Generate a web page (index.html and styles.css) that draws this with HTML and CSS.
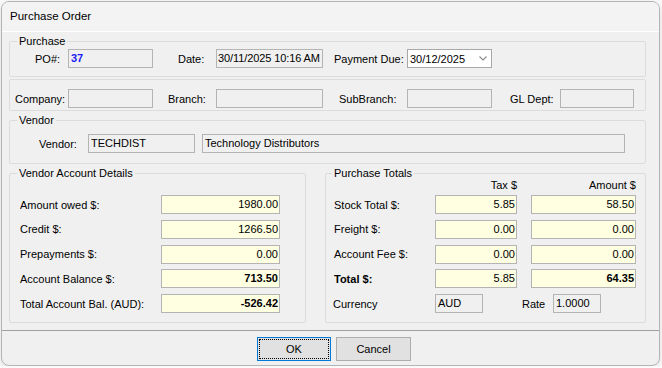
FILE: index.html
```html
<!DOCTYPE html>
<html>
  <head>
    <meta charset="utf-8">
    <title>Purchase Order</title>
    <link rel="stylesheet" href="styles.css">
  </head>
  <body>
    <div class="window">
      <div class="titlebar">Purchase Order</div>

      <div class="content">
        <!-- header -->
        <fieldset class="group g-purchase">
          <legend>Purchase</legend>
          <div class="top-row">
            <span class="lbl lbl-po">PO#:</span>
            <div class="field po-no">37</div>
            <span class="lbl lbl-date">Date:</span>
            <div class="field date">30/11/2025 10:16 AM</div>
            <span class="lbl lbl-due">Payment Due:</span>
            <div class="combo">
              <span>30/12/2025</span>
              <svg class="chevron" width="8" height="5" viewBox="0 0 8 5"><polyline points="0.5,0.5 4,4 7.5,0.5" fill="none" stroke="#8a8a8a" stroke-width="1.1"/></svg>
            </div>
          </div>
        </fieldset>

        <fieldset class="group g-org">
          <div class="top-row">
            <span class="lbl lbl-company">Company:</span>
            <div class="field"></div>
            <span class="lbl lbl-branch">Branch:</span>
            <div class="field"></div>
            <span class="lbl lbl-sub">SubBranch:</span>
            <div class="field"></div>
            <span class="lbl lbl-gl">GL Dept:</span>
            <div class="field"></div>
          </div>
        </fieldset>

        <fieldset class="group g-vendor">
          <legend>Vendor</legend>
          <div class="vendor-row">
            <span class="lbl lbl-vendor">Vendor:</span>
            <div class="field">TECHDIST</div>
            <div class="field vendor-name">Technology Distributors</div>
          </div>
        </fieldset>

        <div class="lower">
          <!-- account -->
          <fieldset class="group g-account">
            <legend>Vendor Account Details</legend>
            <div class="rows">
              <div class="acc-row">
                <span class="lbl">Amount owed $:</span>
                <div class="field num">1980.00</div>
              </div>
              <div class="acc-row">
                <span class="lbl">Credit $:</span>
                <div class="field num">1266.50</div>
              </div>
              <div class="acc-row">
                <span class="lbl">Prepayments $:</span>
                <div class="field num">0.00</div>
              </div>
              <div class="acc-row">
                <span class="lbl">Account Balance $:</span>
                <div class="field num bold">713.50</div>
              </div>
              <div class="acc-row">
                <span class="lbl">Total Account Bal. (AUD):</span>
                <div class="field num bold">-526.42</div>
              </div>
            </div>
          </fieldset>

          <!-- totals -->
          <fieldset class="group g-totals">
            <legend>Purchase Totals</legend>
            <div class="tot-head">
              <span></span>
              <span class="tax">Tax $</span>
              <span class="amount">Amount $</span>
            </div>
            <div class="rows">
              <div class="tot-row">
                <span class="lbl">Stock Total $:</span>
                <div class="field num tax">5.85</div>
                <div class="field num amount">58.50</div>
              </div>
              <div class="tot-row">
                <span class="lbl">Freight $:</span>
                <div class="field num tax">0.00</div>
                <div class="field num amount">0.00</div>
              </div>
              <div class="tot-row">
                <span class="lbl">Account Fee $:</span>
                <div class="field num tax">0.00</div>
                <div class="field num amount">0.00</div>
              </div>
              <div class="tot-row">
                <span class="lbl bold">Total $:</span>
                <div class="field num tax">5.85</div>
                <div class="field num amount bold">64.35</div>
              </div>
              <div class="cur-row">
                <span class="lbl lbl-cur">Currency</span>
                <div class="field small">AUD</div>
                <span class="lbl lbl-rate">Rate</span>
                <div class="field small">1.0000</div>
              </div>
            </div>
          </fieldset>
        </div>
      </div>

      <div class="buttons">
        <button class="btn btn-ok">OK</button>
        <button class="btn">Cancel</button>
      </div>
    </div>
  </body>
</html>
```

FILE: styles.css
```css
* {
  box-sizing: border-box;
}
body {
  margin: 0;
  background-color: #fbfbfb;
  font-family: "Liberation Sans", Arial, sans-serif;
  font-size: 11px;
  color: #000;
}
.window {
  display: flex;
  flex-direction: column;
  width: 659px;
  height: 365px;
  margin: 1px 0 0 1px;
  border: 1px solid #b4b4b4;
  border-radius: 8px;
  background-color: #f0f0f0;
  overflow: hidden;
  box-shadow: 0 2px 8px rgba(0, 0, 0, .12);
}
.titlebar {
  height: 30px;
  padding-left: 8px;
  line-height: 29px;
  font-size: 11.5px;
  background-color: #f3f3f3;
  border-bottom: 1px solid #fff;
}
.content {
  padding: 0 13px 0 7px;
}

/* group boxes */
.group {
  min-width: 0;
  margin: 2px 0 0;
  padding: 0;
  border: 1px solid #dcdcdc;
  border-radius: 2px;
}
.group legend {
  margin-left: 7px;
  padding: 0 2px;
  line-height: 15px;
}
.g-purchase {
  padding-bottom: 8px;
}
.g-org {
  padding: 9px 0 2px;
}
.g-vendor {
  padding: 6px 0 10px;
}
.lower {
  display: flex;
  gap: 19px;
  margin-top: 2px;
}
.g-account {
  width: 297px;
  margin: 0;
  padding: 14px 0 9px 10px;
}
.g-account legend {
  margin-left: -3px;
}
.g-totals {
  width: 321px;
  margin: 0;
  padding: 0 0 9px 8px;
}
.g-totals legend {
  margin-left: -2px;
}

/* rows */
.top-row {
  display: grid;
  grid-template-columns: 58px 85px 63px 107px 84px 85px 68px 74px;
  align-items: center;
  height: 19px;
}
.vendor-row {
  display: grid;
  grid-template-columns: 78px 107px 430px;
  align-items: center;
  height: 19px;
}
.vendor-name {
  margin-left: 7px;
  background-color: #f6f6f6;
}
.lbl {
  white-space: nowrap;
}
.lbl-po { padding-left: 25px; }
.lbl-date { padding-left: 25px; }
.lbl-due { padding-left: 11px; }
.lbl-company { padding-left: 5px; }
.lbl-branch { padding-left: 15px; }
.lbl-sub { padding-left: 16px; }
.lbl-gl { padding-left: 18px; }
.lbl-vendor { padding-left: 29px; }

.rows {
  display: flex;
  flex-direction: column;
  gap: 5.75px;
}
.acc-row {
  display: grid;
  grid-template-columns: 141px 119px;
  align-items: center;
  height: 19px;
}
.tot-head,
.tot-row {
  display: grid;
  grid-template-columns: 101px 96px 105px;
  align-items: center;
}
.tot-head {
  height: 14px;
  margin: -3px 0 3px;
  line-height: 14px;
}
.tot-head span {
  text-align: right;
}
.tot-row {
  height: 19px;
}
.tax {
  width: 82px;
}
.cur-row {
  display: flex;
  align-items: center;
  height: 19px;
}
.lbl-cur {
  width: 101px;
  margin-left: -1px;
}
.cur-row .lbl-cur + .field {
  margin-left: 1px;
}
.lbl-rate {
  width: 70px;
  padding-left: 39px;
}
.field.small {
  width: 48px;
}

/* fields */
.field {
  height: 19px;
  padding: 0 2px;
  line-height: 17px;
  border: 1px solid #b4b4b4;
  background-color: #f0f0f0;
  white-space: nowrap;
  overflow: hidden;
}
.field.num {
  padding-right: 1px;
  text-align: right;
  background-color: #ffffe1;
}
.po-no {
  font-weight: bold;
  color: #1c1cf0;
}
.date {
  padding-left: 1px;
  letter-spacing: -0.1px;
}
.bold {
  font-weight: bold;
}
.combo {
  display: flex;
  align-items: center;
  justify-content: space-between;
  height: 19px;
  padding: 0 4px 0 2px;
  border: 1px solid #a8a8a8;
  background-color: #fff;
}

/* buttons */
.buttons {
  display: flex;
  justify-content: center;
  gap: 5px;
  height: 35px;
  margin-top: auto;
  padding: 6px 0 0 7px;
  border-top: 1px solid #a0a0a0;
}
.btn {
  width: 75px;
  height: 24px;
  padding: 0;
  border: 1px solid #adadad;
  background-color: #e1e1e1;
  font-family: inherit;
  font-size: 11px;
  color: #000;
}
.btn-ok {
  width: 74px;
  border-color: #0078d7;
  outline: 1px dotted #000;
  outline-offset: -3px;
}
```
